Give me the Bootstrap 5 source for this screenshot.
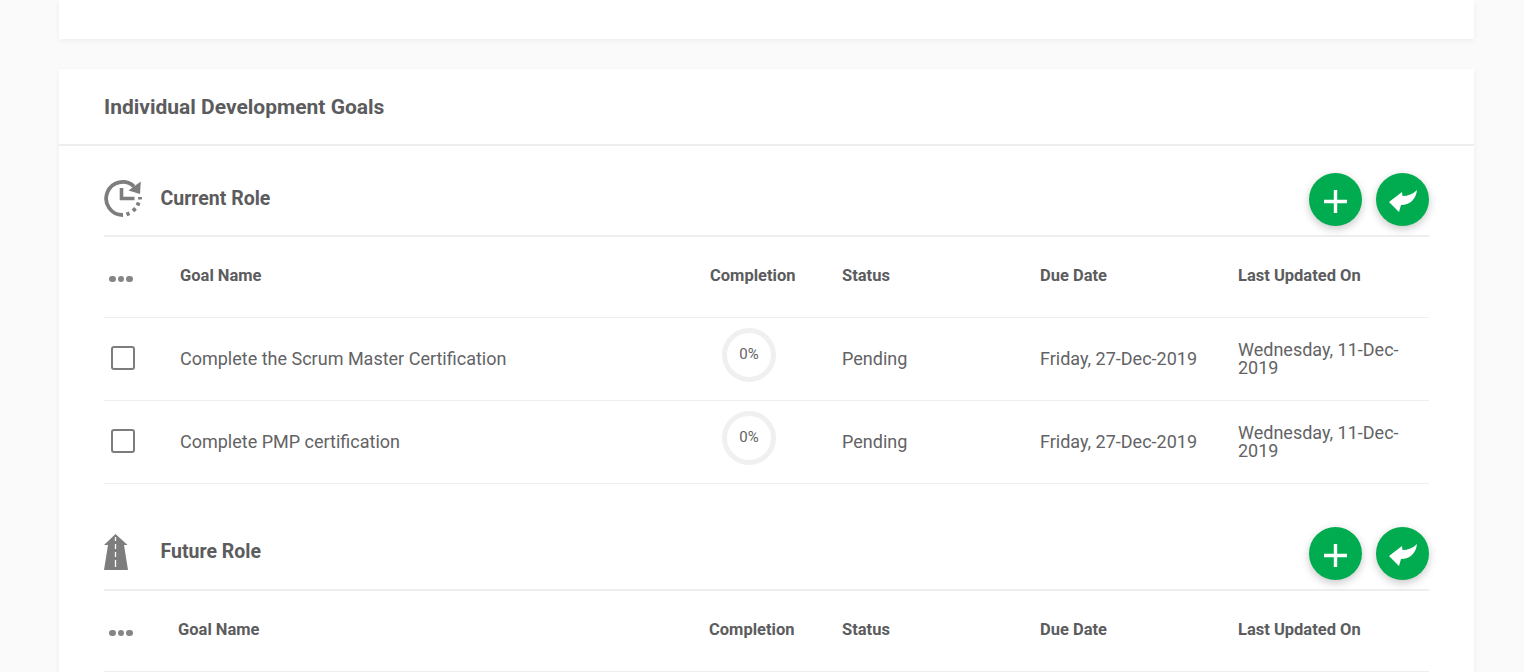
<!DOCTYPE html>
<html lang="en">
<head>
  <meta charset="UTF-8" />
  <meta name="viewport" content="width=device-width, initial-scale=1" />
  <title>Individual Development Goals</title>
  <link href="https://cdn.jsdelivr.net/npm/bootstrap@5.3.0/dist/css/bootstrap.min.css" rel="stylesheet" />
  <style>
    html, body { height: 672px; overflow: hidden; }
    body { background: #fafafa; font-family: Roboto, "Liberation Sans", sans-serif; color: #58585a; }
    .page-wrap { padding: 0 50px 0 59px; }
    .panel { background: #fff; box-shadow: 0 2px 6px rgba(0,0,0,.05); }
    .panel-top { height: 39px; margin-bottom: 30px; }
    .panel-head { height: 77px; padding: 3px 45px 0; border-bottom: 2px solid #eee; }
    .panel-head h2 { font-size: 21px; font-weight: 700; margin: 0; color: #5c5c5e; }
    .panel-body { padding: 27px 45px 40px; }
    .role-head { height: 64px; border-bottom: 2px solid #eee; align-items: flex-start; }
    .role-title { font-size: 19.5px; font-weight: 700; margin: 0; color: #5c5c5e; line-height: 51px; }
    .role-future .role-title { line-height: 49px; }
    .role-icon { width: 38px; height: 38px; margin-right: 18.5px; margin-top: 7px; flex: none; }
    .fab-btn { width: 53px; height: 53px; border-radius: 50%; background: #00ac4f; border: 0; padding: 0; box-shadow: 0 3px 8px rgba(0,0,0,.22); }
    .fab-group { gap: 14.5px; }
    .goal-table { table-layout: fixed; width: 100%; margin: 0 0 43px; color: #636365; font-size: 18px; }
    .goal-table th, .goal-table td { padding: 0; border-bottom: 1px solid #eee; vertical-align: middle; background: none; color: #636365; box-shadow: none; }
    .goal-table th { height: 80px; font-size: 16.5px; font-weight: 700; padding-bottom: 1px; color: #5c5c5e; }
    .goal-table-future th { height: 81px; }
    .goal-table td { height: 83px; }
    .goal-table .updated { line-height: 18px; }
    .dots { display: flex; gap: 2px; padding-left: 5px; margin-top: 5px; }
    .dots i { width: 6.5px; height: 6.5px; border-radius: 50%; background: #858585; display: block; }
    .check-box { display: block; width: 24px; height: 24px; margin: -1px 0 0 7px; border: 2px solid #7d7d7d; border-radius: 3px; }
    .ring { width: 54px; height: 54px; margin: -7px 0 0 12px; padding-bottom: 2px; border: 5px solid #f0f0f0; border-radius: 50%; font-size: 15px; display: flex; align-items: center; justify-content: center; }
  </style>
</head>
<body>

<div class="page-wrap">
  <div class="panel panel-top"></div>

  <div class="panel">
    <div class="panel-head d-flex align-items-center">
      <h2>Individual Development Goals</h2>
    </div>
    <div class="panel-body">

      <!-- Current role -->
      <div class="role-head d-flex">
        <svg class="role-icon" viewBox="0 0 38 38" fill="none" stroke="#7d7d7d">
          <path d="M30 6.500A16.500 16.500 0 1 0 19 35" stroke-width="3.800"/>
          <path d="M36.800 1.500 36 14 24.500 10.500z" fill="#7d7d7d" stroke="none"/>
          <path d="M17.500 8v10.500h13" stroke-width="3.600"/>
          <path d="M22.500 34.500l3-1.200M29 30.800l2.500-2.400M33.500 25.500l1.200-3M36 19.500v-2.500" stroke-width="3.800"/>
        </svg>
        <h3 class="role-title">Current Role</h3>
        <div class="ms-auto d-flex fab-group">
          <button class="fab-btn" type="button" aria-label="Add"><svg width="53" height="53" viewBox="0 0 53 53"><path d="M26.500 17v23M15 28.500h23" stroke="#fff" stroke-width="3.400"/></svg></button>
          <button class="fab-btn" type="button" aria-label="Return"><svg width="53" height="53" viewBox="0 0 53 53"><path d="M13 29 26 19l.5 4c5.500 0 10.500-2 14.500-6-1 9-7 15-16 15l-2 7z" fill="#fff"/></svg></button>
        </div>
      </div>
      <table class="table goal-table">
        <colgroup><col style="width:76px"><col style="width:530px"><col style="width:132px"><col style="width:198px"><col style="width:198px"><col></colgroup>
        <thead>
          <tr>
            <th><span class="dots"><i></i><i></i><i></i></span></th>
            <th>Goal Name</th><th>Completion</th><th>Status</th><th>Due Date</th><th>Last Updated On</th>
          </tr>
        </thead>
        <tbody>
          <tr>
            <td><span class="check-box"></span></td>
            <td>Complete the Scrum Master Certification</td>
            <td><div class="ring">0%</div></td>
            <td>Pending</td>
            <td>Friday, 27-Dec-2019</td>
            <td class="updated">Wednesday, 11-Dec-2019</td>
          </tr>
          <tr>
            <td><span class="check-box"></span></td>
            <td>Complete PMP certification</td>
            <td><div class="ring">0%</div></td>
            <td>Pending</td>
            <td>Friday, 27-Dec-2019</td>
            <td class="updated">Wednesday, 11-Dec-2019</td>
          </tr>
        </tbody>
      </table>

      <!-- Future role -->
      <div class="role-head role-future d-flex">
        <svg class="role-icon" viewBox="0 0 38 38">
          <path d="M11.500 0 23.500 11H20l4 25H0L4 11H0z" fill="#7d7d7d"/>
          <path d="M11.500 3v4M11.500 10v5M11.500 18v5M11.500 26v7" stroke="#fff" stroke-width="1.300"/>
        </svg>
        <h3 class="role-title">Future Role</h3>
        <div class="ms-auto d-flex fab-group">
          <button class="fab-btn" type="button" aria-label="Add"><svg width="53" height="53" viewBox="0 0 53 53"><path d="M26.500 17v23M15 28.500h23" stroke="#fff" stroke-width="3.400"/></svg></button>
          <button class="fab-btn" type="button" aria-label="Return"><svg width="53" height="53" viewBox="0 0 53 53"><path d="M13 29 26 19l.5 4c5.500 0 10.500-2 14.500-6-1 9-7 15-16 15l-2 7z" fill="#fff"/></svg></button>
        </div>
      </div>
      <table class="table goal-table goal-table-future">
        <colgroup><col style="width:74px"><col style="width:531px"><col style="width:133px"><col style="width:198px"><col style="width:198px"><col></colgroup>
        <thead>
          <tr>
            <th><span class="dots"><i></i><i></i><i></i></span></th>
            <th>Goal Name</th><th>Completion</th><th>Status</th><th>Due Date</th><th>Last Updated On</th>
          </tr>
        </thead>
      </table>

    </div>
  </div>
</div>

<script src="https://cdn.jsdelivr.net/npm/bootstrap@5.3.0/dist/js/bootstrap.bundle.min.js"></script>
</body>
</html>
